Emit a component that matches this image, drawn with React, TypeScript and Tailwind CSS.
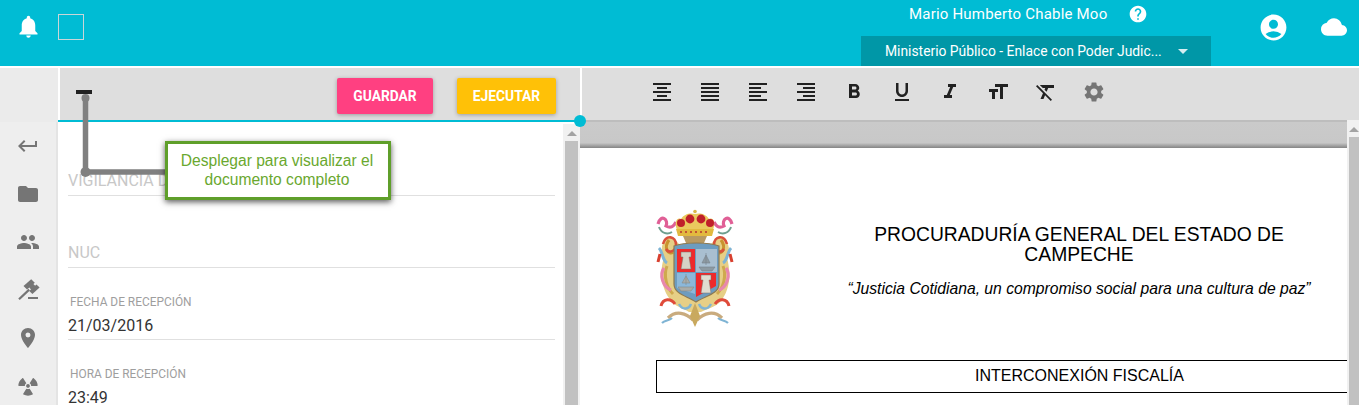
import React from "react";
import {
  MdNotifications, MdHelp, MdAccountCircle, MdCloud, MdFormatAlignCenter, MdFormatAlignJustify,
  MdFormatAlignLeft, MdFormatAlignRight, MdFormatBold, MdFormatUnderlined, MdFormatItalic,
  MdFormatSize, MdFormatClear, MdSettings, MdKeyboardReturn, MdFolder, MdPeople, MdPlace,
} from "react-icons/md";
import { FaRadiation } from "react-icons/fa";

function Gavel() {
  return (
    <svg width="24" height="24" viewBox="0 0 24 24" fill="currentColor">
      <path d="M7.5 8 L15.2 1.3 L18.8 4.8 L11 11.6 Z" />
      <path d="M13.3 13 L20.5 6.5 L23.6 9.6 L16.4 16 Z" />
      <path d="M11 6.5 L15 3.8 L20.5 9 L16.5 13.5 Z" />
      <path d="M13.2 11.6 L3 21.2" fill="none" stroke="currentColor" strokeWidth="2.2" />
      <path d="M12 19 H22 V21 H12 Z" />
    </svg>
  );
}

function Crest() {
  return (
    <svg width="78" height="118" viewBox="17 9 78 118" className="shrink-0 blur-[0.35px]">
      {/* gold mantling */}
      <path d="M34 38 C24 36 20 48 25 58 C20 72 23 88 30 98 C34 106 44 108 50 112 L62 112 C70 108 80 106 84 98 C91 88 92 72 88 58 C93 48 88 36 78 38 L70 46 L42 46 Z" fill="#e6cf86" />
      <path d="M30 40 C24 48 30 56 34 52 M82 40 C88 48 82 56 78 52" fill="none" stroke="#c9932e" strokeWidth="3" />
      <path d="M28 66 C24 76 28 88 34 94 M84 66 C88 76 84 88 78 94" fill="none" stroke="#cfa94e" strokeWidth="3" />
      {/* curls */}
      <path d="M19 24 C22 13 30 20 27 26 C32 29 35 26 37 22" fill="none" stroke="#e05f96" strokeWidth="3.2" />
      <path d="M93 24 C90 13 82 20 85 26 C80 29 77 26 75 22" fill="none" stroke="#e05f96" strokeWidth="3.2" />
      <path d="M20 27 C22 33 28 35 33 32" fill="none" stroke="#6f9f8f" strokeWidth="2" />
      <path d="M92 27 C90 33 84 35 79 32" fill="none" stroke="#6f9f8f" strokeWidth="2" />
      <path d="M24 44 C27 34 37 36 37 45 C37 51 30 54 27 49" fill="none" stroke="#d9503a" strokeWidth="2.6" />
      <path d="M88 44 C85 34 75 36 75 45 C75 51 82 54 85 49" fill="none" stroke="#d9503a" strokeWidth="2.6" />
      <path d="M20 48 C24 52 23 60 28 63" fill="none" stroke="#7fb4d4" strokeWidth="3" />
      <path d="M92 48 C88 52 89 60 84 63" fill="none" stroke="#7fb4d4" strokeWidth="3" />
      <path d="M25 68 C20 75 24 87 32 90" fill="none" stroke="#e887ad" strokeWidth="3.2" />
      <path d="M87 68 C92 75 88 87 80 90" fill="none" stroke="#e887ad" strokeWidth="3.2" />
      <path d="M21 54 L19 62 M91 54 L93 62" stroke="#d8402f" strokeWidth="3" />
      <path d="M22 106 C24 98 32 98 36 104 M90 106 C88 98 80 98 76 104" fill="none" stroke="#df4b3a" strokeWidth="3" />
      <path d="M40 104 C44 111 50 109 52 104 M72 104 C68 111 62 109 60 104" fill="none" stroke="#7fb4d4" strokeWidth="2.5" />
      <path d="M29 118 C37 110 47 113 54 120 M83 118 C75 110 65 113 58 120" fill="none" stroke="#c9ab7e" strokeWidth="3.2" />
      <path d="M23 123 C26 120 30 121 33 118 M89 123 C86 120 82 121 79 118" fill="none" stroke="#7fb4d4" strokeWidth="2.2" />
      <path d="M56 103 L51 116 L56 127 L61 116 Z" fill="#c9a95e" />
      {/* crown */}
      <path d="M38 30 C35 22 38 17 42 19 C46 13 52 13 56 14 C60 13 66 13 70 19 C74 17 77 22 74 30 Z" fill="#eac95e" />
      <circle cx="42" cy="23" r="4" fill="#c01f2a" />
      <circle cx="51" cy="19" r="4.4" fill="#c01f2a" />
      <circle cx="62" cy="19" r="4.4" fill="#c01f2a" />
      <circle cx="71" cy="23" r="4" fill="#c01f2a" />
      <circle cx="56" cy="11.5" r="1.8" fill="#d9b84a" />
      <path d="M37 29 H75 L73 36 H39 Z" fill="#e2b93f" />
      <path d="M41 32 H71" stroke="#b8362f" strokeWidth="1.6" strokeDasharray="2 3" />
      <path d="M44 36 H68 L65 43 H47 Z" fill="#b89a62" />
      {/* shield */}
      <path d="M35 46 C45 42 70 42 80 46 L80 84 C80 94 66 96 57 102 C48 96 35 94 35 84 Z" fill="#6d9cbf" stroke="#8d7a52" strokeWidth="1.2" />
      <path d="M38 49 H56 V72 H38 Z" fill="#ee2a2c" />
      <path d="M57 49 H78 V72 H57 Z" fill="#a9bfd0" />
      <path d="M38 73 H56 V94 L38 88 Z" fill="#8cb8da" />
      <path d="M57 73 H77 V86 L57 97 Z" fill="#ee2a2c" />
      <path d="M42 69 L44 57 H42 V52 H52 V57 H50 L52 69 Z" fill="#d6d2c6" stroke="#77736a" strokeWidth="0.5" />
      <path d="M62 93 L64 80 H62 V75 H72 V80 H70 L72 93 Z" fill="#e0dcd0" stroke="#77736a" strokeWidth="0.5" />
      <path d="M60 67 H76 L73 71 H63 Z M67 53 V65 M63 63 L67 55 L71 63 Z" fill="#8d9aa2" stroke="#77828a" strokeWidth="0.6" />
      <path d="M39 87 H55 L52 91 H42 Z M47 74 V85 M43 83 L47 76 L51 83 Z" fill="#a9aca8" stroke="#858a88" strokeWidth="0.6" />
    </svg>
  );
}

function Field({ label, value, placeholder, h = "h-[72px]" }: { label?: string; value?: string; placeholder?: string; h?: string }) {
  return (
    <div className={`flex flex-col justify-end ${h} border-b border-[#e0e0e0]`}>
      {label && <div className="mb-[7px] pl-[2px] text-[11.9px] leading-[14px] text-[#9e9e9e]">{label}</div>}
      {value && <div className="pb-[3px] text-[16px] leading-[20px] text-[#333333]">{value}</div>}
      {placeholder && <div className="pb-[4px] text-[16px] leading-[20px] text-[#c8c8c8]">{placeholder}</div>}
    </div>
  );
}

function Scroll({ outer }: { outer: string }) {
  return (
    <div className={`flex flex-col items-center bg-[#f1f1f1] ${outer}`}>
      <div className="mt-[7px] h-0 w-0 border-x-[5px] border-b-[5px] border-x-transparent border-b-[#a3a3a3]" />
      <div className="mt-[5px] w-full flex-1 bg-[#c1c1c1]" />
    </div>
  );
}

export default function App() {
  const side = [MdKeyboardReturn, MdFolder, MdPeople];
  const tools = [
    MdFormatAlignCenter, MdFormatAlignJustify, MdFormatAlignLeft, MdFormatAlignRight, MdFormatBold,
    MdFormatUnderlined, MdFormatItalic, MdFormatSize, MdFormatClear,
  ];
  return (
    <div className="relative h-[405px] w-[1359px] overflow-hidden bg-white font-['Roboto',sans-serif]">
      <header className="flex h-[66px] bg-[#00bcd4] text-white">
        <div className="flex w-[861px] items-start pt-[14px]">
          <MdNotifications size={27} className="-mt-[1px] ml-[15px] shrink-0" />
          <div className="ml-[16px] h-[26px] w-[26px] border border-[#c9d6d8]" />
        </div>
        <div className="flex w-[350px] flex-col">
          <div className="flex h-[36px] items-start pl-[48px] pt-[4px]">
            <span className="text-[15px] leading-[20px] tracking-[0.2px]">Mario Humberto Chable Moo</span>
            <MdHelp size={20} className="ml-[21px]" />
          </div>
          <div className="flex h-[30px] items-center bg-[#0097a7] pl-[24px]">
            <span className="text-[13.85px] leading-[20px]">Ministerio Público - Enlace con Poder Judic...</span>
            <span className="ml-[16px] h-0 w-0 border-x-[5px] border-t-[5px] border-x-transparent border-t-[#d5eef1]" />
          </div>
        </div>
        <div className="flex items-start pt-[12px]">
          <MdAccountCircle size={31} className="ml-[47px]" />
          <MdCloud size={26} className="ml-[32px] mt-[2px]" />
        </div>
      </header>

      <div className="mt-[2px] flex h-[337px]">
        <div className="flex w-[580px] shrink-0">
          <aside className="flex w-[58px] shrink-0 flex-col overflow-hidden">
            <div className="h-[54px] shrink-0 bg-[#ebebeb]" />
            <nav className="flex-1 border-r-2 border-[#e4e4e4] bg-[#eeeeee] text-[#757575]">
              {side.map((I, i) => (
                <div key={i} className="flex h-[48px] items-center justify-center">
                  <I size={24} />
                </div>
              ))}
              <div className="flex h-[48px] items-center justify-center">
                <Gavel />
              </div>
              <div className="flex h-[48px] items-center justify-center">
                <MdPlace size={24} />
              </div>
              <div className="flex h-[48px] items-center justify-center">
                <FaRadiation size={20} />
              </div>
            </nav>
          </aside>
          <section className="flex flex-1 flex-col">
            <div className="flex h-[52px] shrink-0 items-center justify-between border-l-2 border-white bg-[#dedede] pr-[24px] pt-[4px]">
              <div className="mb-[8px] ml-[16px] h-[4px] w-[16px] bg-[#212121]" />
              <div className="flex gap-[24px]">
                <button className="h-[36px] w-[96px] rounded-[2px] bg-[#ff4081] text-[13.8px] font-bold text-white shadow-[0_1px_4px_rgba(0,0,0,0.3)]">GUARDAR</button>
                <button className="h-[36px] w-[99px] rounded-[2px] bg-[#ffc107] text-[13.8px] font-bold text-white shadow-[0_1px_4px_rgba(0,0,0,0.3)]">EJECUTAR</button>
              </div>
            </div>
            <div className="h-[2px] shrink-0 bg-[#00bcd4]" />
            <div className="flex flex-1 overflow-hidden">
              <div className="ml-[10px] mr-[8px] w-[487px] shrink-0">
                <Field h="h-[74px]" placeholder="VIGILANCIA DE" />
                <Field placeholder="NUC" />
                <Field label="FECHA DE RECEPCIÓN" value="21/03/2016" />
                <Field label="HORA DE RECEPCIÓN" value="23:49" />
              </div>
              <Scroll outer="mt-[2px] w-[17px] px-[2px]" />
            </div>
          </section>
        </div>

        <div className="flex flex-1 flex-col">
          <div className="flex h-[52px] shrink-0 items-center gap-[24px] border-l-2 border-white bg-[#dedede] pb-[4px] pl-[68px] text-[#212121]">
            {tools.map((I, i) => (
              <I key={i} size={24} className="shrink-0" />
            ))}
            <MdSettings size={24} className="shrink-0 text-[#757575]" />
          </div>
          <div className="flex flex-1 overflow-hidden">
            <div className="w-[767px] shrink-0 overflow-hidden">
              <div className="h-[2px] bg-[#bdbdbd]" />
              <div className="h-[26px] bg-gradient-to-b from-[#cacaca] via-[#c8c8c8] via-80% to-[#858585]" />
              <div className="w-[923px] pl-[76px] font-['Liberation_Sans',sans-serif] text-black">
                <div className="flex pt-[61px]">
                  <Crest />
                  <div className="ml-[110px] w-[470px] pt-[16px] text-center">
                    <div className="text-[19.3px] leading-[20px]">PROCURADURÍA GENERAL DEL ESTADO DE CAMPECHE</div>
                    <div className="mt-[14px] text-[15.7px] italic leading-[20px]">“Justicia Cotidiana, un compromiso social para una cultura de paz”</div>
                  </div>
                </div>
                <div className="mt-[33px] flex h-[33px] items-center justify-center border border-black pb-[2px] text-[16px]">INTERCONEXIÓN FISCALÍA</div>
              </div>
            </div>
            <Scroll outer="w-[12px] pl-[2px]" />
          </div>
        </div>
      </div>

      {/* slider handle */}
      <div className="absolute left-[574px] top-[115px] h-[12px] w-[12px] rounded-full bg-[#00bcd4]" />

      {/* callout leader */}
      <svg className="absolute left-0 top-0" width="400" height="210">
        <path d="M85.5 98 V172 H170" fill="none" stroke="#808080" strokeWidth="5.5" strokeLinecap="round" strokeLinejoin="round" />
        <circle cx="85.5" cy="172" r="5" fill="#808080" />
        <circle cx="85.5" cy="98" r="4" fill="#808080" />
      </svg>

      {/* callout */}
      <div className="absolute left-[165px] top-[141px] flex h-[59px] w-[226px] items-center justify-center border-[3px] border-[#5f9f2a] bg-white pb-[1px] pr-[2px] text-center font-['Liberation_Sans',sans-serif] text-[15.6px] leading-[19px] text-[#6aa82f] shadow-[0_2px_6px_rgba(0,0,0,0.65)]">
        Desplegar para visualizar el
        <br />
        documento completo
      </div>
    </div>
  );
}
